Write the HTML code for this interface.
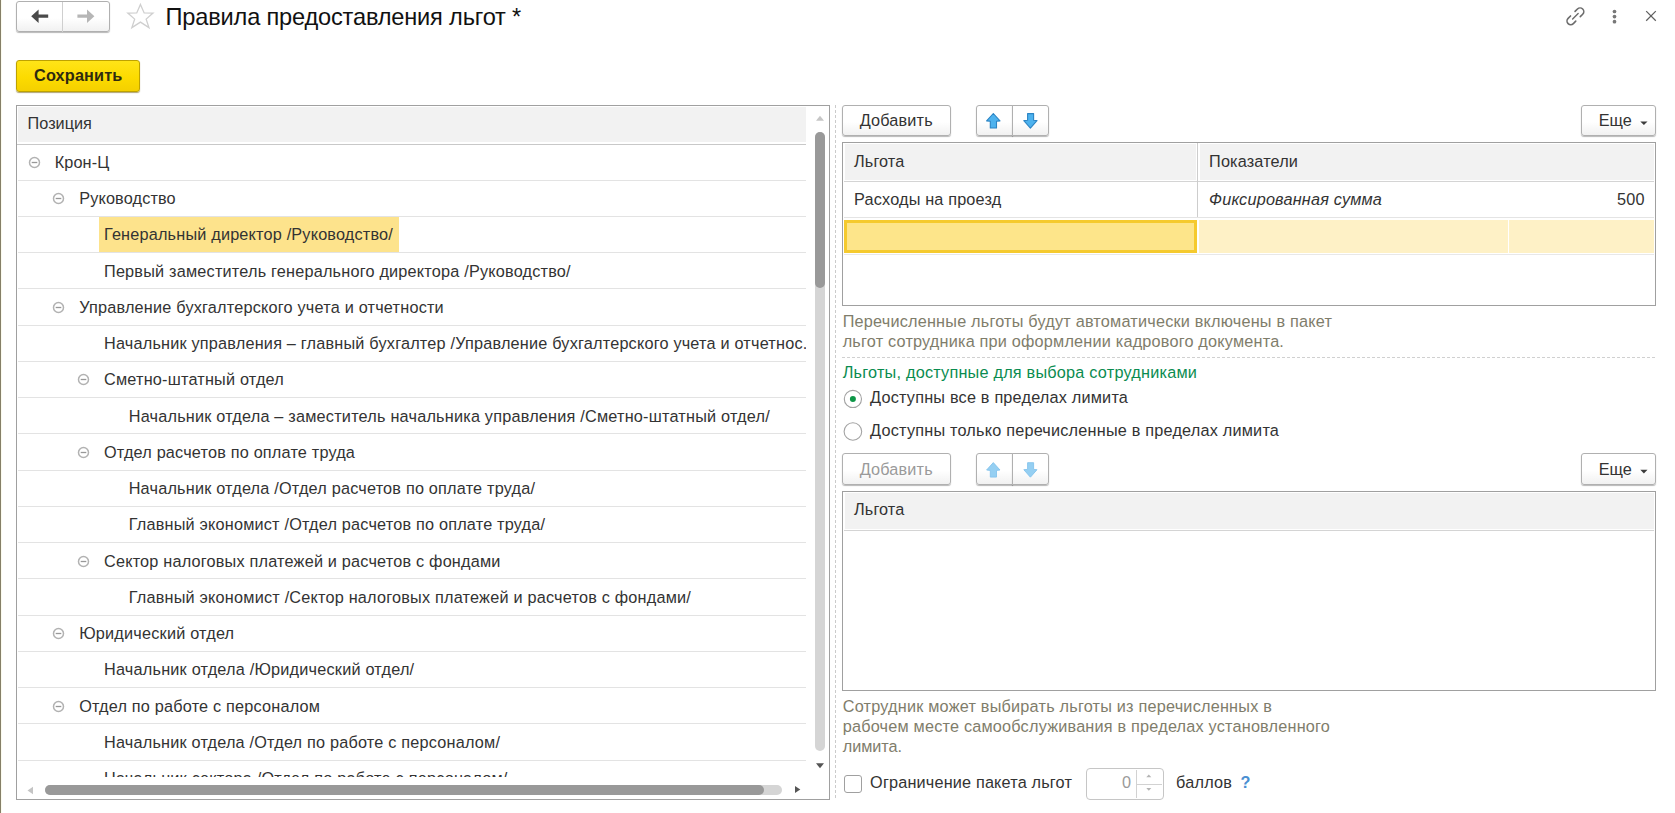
<!DOCTYPE html>
<html lang="ru">
<head>
<meta charset="utf-8">
<title>Правила предоставления льгот</title>
<style>
html,body{margin:0;padding:0;}
body{width:1675px;height:813px;overflow:hidden;background:#fff;position:relative;font-family:"Liberation Sans",sans-serif;font-size:16.25px;color:#333;}
.abs{position:absolute;}
.t{position:absolute;white-space:nowrap;line-height:20px;height:20px;}
.edge{position:absolute;left:0;top:0;width:1px;height:813px;background:#857f67;}
.edge2{position:absolute;left:1px;top:0;width:1px;height:813px;background:#fbfbee;}
.btn{position:absolute;box-sizing:border-box;border:1px solid #b0b0b0;border-radius:3px;background:linear-gradient(#ffffff 0%,#ffffff 55%,#f1f1f1 100%);box-shadow:0 1px 1px rgba(0,0,0,.28);}
.btn.l{border-radius:3px 0 0 3px;}
.btn.r{border-radius:0 3px 3px 0;}
.save{position:absolute;box-sizing:border-box;left:16px;top:60px;width:124px;height:32px;border:1px solid #bea200;border-radius:3px;background:linear-gradient(#ffe418 0%,#fcdb00 55%,#f4d000 100%);box-shadow:0 1px 1px rgba(110,90,0,.55);}
.panel{position:absolute;box-sizing:border-box;border:1px solid #a0a0a0;background:#fff;overflow:hidden;}
.hdr{position:absolute;background:#f2f2f2;}
.rl{position:absolute;left:1px;width:788px;height:1px;background:#e3e3e3;}
.sel{position:absolute;background:#fde38c;}
.ico{position:absolute;}
.vdash{position:absolute;left:835px;top:105px;width:1px;height:695px;background:repeating-linear-gradient(to bottom,#cbcbcb 0,#cbcbcb 3px,transparent 3px,transparent 5px);}
.hdash{position:absolute;left:842px;top:357px;width:814px;height:1px;background:repeating-linear-gradient(to right,#d0d0d0 0,#d0d0d0 3px,transparent 3px,transparent 5px);}
</style>
</head>
<body>
<div class="edge"></div><div class="edge2"></div>

<!-- nav buttons -->
<div class="btn" style="left:16px;top:1px;width:94px;height:31px;"></div>
<div class="abs" style="left:62px;top:2px;width:1px;height:30px;background:#cfcfcf;"></div>

<!-- star -->

<!-- top right icons -->

<!-- save -->
<div class="save"></div>

<!-- tree panel -->
<div class="panel" style="left:16px;top:105px;width:814px;height:695px;">
  <div class="hdr" style="left:1px;top:1px;width:788px;height:35px;"></div>
  <div class="abs" style="left:0;top:38px;width:789px;height:1px;background:#c8c8c8;"></div>
  <span class="t" style="left:10.6px;top:7px;">Позиция</span>
<div class="rl" style="top:74px"></div>
<svg class="ico" style="left:11.2px;top:49.8px" width="13" height="13" viewBox="0 0 13 13"><circle cx="6.5" cy="6.5" r="5" fill="#fff" stroke="#b2b2b2" stroke-width="1.5"/><path d="M3.7 6.5h5.6" stroke="#989898" stroke-width="1.3"/></svg>
<div class="rl" style="top:110px"></div>
<svg class="ico" style="left:34.9px;top:86.1px" width="13" height="13" viewBox="0 0 13 13"><circle cx="6.5" cy="6.5" r="5" fill="#fff" stroke="#b2b2b2" stroke-width="1.5"/><path d="M3.7 6.5h5.6" stroke="#989898" stroke-width="1.3"/></svg>
<div class="rl" style="top:146px"></div>
<div class="sel" style="left:82px;top:111px;width:300px;height:35px"></div>
<div class="rl" style="top:182px"></div>
<div class="rl" style="top:219px"></div>
<svg class="ico" style="left:34.9px;top:194.8px" width="13" height="13" viewBox="0 0 13 13"><circle cx="6.5" cy="6.5" r="5" fill="#fff" stroke="#b2b2b2" stroke-width="1.5"/><path d="M3.7 6.5h5.6" stroke="#989898" stroke-width="1.3"/></svg>
<div class="rl" style="top:255px"></div>
<div class="rl" style="top:291px"></div>
<svg class="ico" style="left:59.7px;top:267.3px" width="13" height="13" viewBox="0 0 13 13"><circle cx="6.5" cy="6.5" r="5" fill="#fff" stroke="#b2b2b2" stroke-width="1.5"/><path d="M3.7 6.5h5.6" stroke="#989898" stroke-width="1.3"/></svg>
<div class="rl" style="top:327px"></div>
<div class="rl" style="top:364px"></div>
<svg class="ico" style="left:59.7px;top:339.8px" width="13" height="13" viewBox="0 0 13 13"><circle cx="6.5" cy="6.5" r="5" fill="#fff" stroke="#b2b2b2" stroke-width="1.5"/><path d="M3.7 6.5h5.6" stroke="#989898" stroke-width="1.3"/></svg>
<div class="rl" style="top:400px"></div>
<div class="rl" style="top:436px"></div>
<div class="rl" style="top:472px"></div>
<svg class="ico" style="left:59.7px;top:448.5px" width="13" height="13" viewBox="0 0 13 13"><circle cx="6.5" cy="6.5" r="5" fill="#fff" stroke="#b2b2b2" stroke-width="1.5"/><path d="M3.7 6.5h5.6" stroke="#989898" stroke-width="1.3"/></svg>
<div class="rl" style="top:509px"></div>
<div class="rl" style="top:545px"></div>
<svg class="ico" style="left:34.9px;top:521.0px" width="13" height="13" viewBox="0 0 13 13"><circle cx="6.5" cy="6.5" r="5" fill="#fff" stroke="#b2b2b2" stroke-width="1.5"/><path d="M3.7 6.5h5.6" stroke="#989898" stroke-width="1.3"/></svg>
<div class="rl" style="top:581px"></div>
<div class="rl" style="top:617px"></div>
<svg class="ico" style="left:34.9px;top:593.5px" width="13" height="13" viewBox="0 0 13 13"><circle cx="6.5" cy="6.5" r="5" fill="#fff" stroke="#b2b2b2" stroke-width="1.5"/><path d="M3.7 6.5h5.6" stroke="#989898" stroke-width="1.3"/></svg>
<div class="rl" style="top:654px"></div>
<span class="t" style="left:37.7px;top:46px;font-size:16.25px;letter-spacing:0.124px;">Крон-Ц</span>
<span class="t" style="left:62.2px;top:82px;font-size:16.25px;letter-spacing:0.148px;">Руководство</span>
<span class="t" style="left:87.0px;top:118px;font-size:16.25px;letter-spacing:0.182px;">Генеральный директор /Руководство/</span>
<span class="t" style="left:87.0px;top:155px;font-size:16.25px;letter-spacing:0.200px;">Первый заместитель генерального директора /Руководство/</span>
<span class="t" style="left:62.2px;top:191px;font-size:16.25px;letter-spacing:0.204px;">Управление бухгалтерского учета и отчетности</span>
<span class="t" style="left:87.0px;top:227px;font-size:16.25px;letter-spacing:0.198px;">Начальник управления – главный бухгалтер /Управление бухгалтерского учета и отчетнос...</span>
<span class="t" style="left:87.0px;top:263px;font-size:16.25px;letter-spacing:0.201px;">Сметно-штатный отдел</span>
<span class="t" style="left:111.7px;top:300px;font-size:16.25px;letter-spacing:0.208px;">Начальник отдела – заместитель начальника управления /Сметно-штатный отдел/</span>
<span class="t" style="left:87.0px;top:336px;font-size:16.25px;letter-spacing:0.186px;">Отдел расчетов по оплате труда</span>
<span class="t" style="left:111.7px;top:372px;font-size:16.25px;letter-spacing:0.200px;">Начальник отдела /Отдел расчетов по оплате труда/</span>
<span class="t" style="left:111.7px;top:408px;font-size:16.25px;letter-spacing:0.194px;">Главный экономист /Отдел расчетов по оплате труда/</span>
<span class="t" style="left:87.0px;top:445px;font-size:16.25px;letter-spacing:0.196px;">Сектор налоговых платежей и расчетов с фондами</span>
<span class="t" style="left:111.7px;top:481px;font-size:16.25px;letter-spacing:0.205px;">Главный экономист /Сектор налоговых платежей и расчетов с фондами/</span>
<span class="t" style="left:62.2px;top:517px;font-size:16.25px;letter-spacing:0.209px;">Юридический отдел</span>
<span class="t" style="left:87.0px;top:553px;font-size:16.25px;letter-spacing:0.211px;">Начальник отдела /Юридический отдел/</span>
<span class="t" style="left:62.2px;top:590px;font-size:16.25px;letter-spacing:0.193px;">Отдел по работе с персоналом</span>
<span class="t" style="left:87.0px;top:626px;font-size:16.25px;letter-spacing:0.201px;">Начальник отдела /Отдел по работе с персоналом/</span>
<span class="t" style="left:87.0px;top:662px;font-size:16.25px;letter-spacing:0.212px;">Начальник сектора /Отдел по работе с персоналом/</span>
  <!-- mask below rows / horizontal scrollbar -->
  <div class="abs" style="left:0;top:671px;width:812px;height:22px;background:#fff;"></div>
  <div class="abs" style="left:28px;top:679px;width:737px;height:10px;border-radius:5px;background:#d5d5d5;"></div>
  <div class="abs" style="left:28px;top:679px;width:719px;height:10px;border-radius:5px;background:#999;"></div>
  <svg class="abs" style="left:10px;top:680px" width="7" height="9" viewBox="0 0 7 9"><path d="M0.5 4.5 L6 0.8 L6 8.2 Z" fill="#c4c4c4"/></svg>
  <svg class="abs" style="left:777px;top:679px" width="7" height="9" viewBox="0 0 7 9"><path d="M6.3 4.5 L1 1 L1 8 Z" fill="#555"/></svg>
  <!-- vertical scrollbar -->
  <div class="abs" style="left:789px;top:0;width:24px;height:669px;background:#fff;"></div>
  <div class="abs" style="left:798px;top:26px;width:10px;height:619px;border-radius:5px;background:#d5d5d5;"></div>
  <div class="abs" style="left:798px;top:26px;width:10px;height:156px;border-radius:5px;background:#999;"></div>
  <svg class="abs" style="left:798px;top:9px" width="10" height="7" viewBox="0 0 10 7"><path d="M5 0.8 L9 5.8 L1 5.8 Z" fill="#c6c6c6"/></svg>
  <svg class="abs" style="left:798px;top:656px" width="10" height="7" viewBox="0 0 10 7"><path d="M5 6.2 L9 1.2 L1 1.2 Z" fill="#555"/></svg>
</div>

<div class="vdash"></div>

<!-- right: toolbar 1 -->
<div class="btn" style="left:842px;top:105px;width:109px;height:31px;"></div>
<div class="btn l" style="left:976px;top:105px;width:37px;height:31px;"></div>
<div class="btn r" style="left:1012px;top:105px;width:37px;height:31px;"></div>
<div class="btn" style="left:1581px;top:105px;width:75px;height:31px;"></div>

<!-- table 1 -->
<div class="panel" style="left:842px;top:142px;width:814px;height:164px;">
  <div class="hdr" style="left:2px;top:1px;width:351px;height:36px;"></div>
  <div class="hdr" style="left:357px;top:1px;width:454px;height:36px;"></div>
  <div class="abs" style="left:1px;top:38px;width:810px;height:1px;background:#d4d4d4;"></div>
  <div class="abs" style="left:354px;top:0;width:1px;height:74px;background:#cdcdcd;"></div>
  <div class="abs" style="left:1px;top:74px;width:810px;height:1px;background:#e4e4e4;"></div>
  <div class="abs" style="left:356px;top:77px;width:309px;height:33px;background:#fef1c6;"></div>
  <div class="abs" style="left:666px;top:77px;width:145px;height:33px;background:#fef1c6;"></div>
  <div class="abs" style="left:1px;top:77px;width:353px;height:33px;box-sizing:border-box;border:3px solid #f5ca2e;background:#fde58a;"></div>
  <div class="abs" style="left:1px;top:111px;width:810px;height:1px;background:#e8e8e8;"></div>
</div>

<div class="hdash"></div>

<!-- radios -->

<!-- toolbar 2 -->
<div class="btn" style="left:842px;top:453px;width:109px;height:32px;"></div>
<div class="btn l" style="left:976px;top:453px;width:37px;height:32px;"></div>
<div class="btn r" style="left:1012px;top:453px;width:37px;height:32px;"></div>
<div class="btn" style="left:1581px;top:453px;width:75px;height:32px;"></div>

<!-- table 2 -->
<div class="panel" style="left:842px;top:491px;width:814px;height:200px;">
  <div class="hdr" style="left:2px;top:1px;width:809px;height:36px;"></div>
  <div class="abs" style="left:1px;top:38px;width:810px;height:1px;background:#d4d4d4;"></div>
</div>

<!-- checkbox + number -->
<div class="abs" style="left:844px;top:775px;width:18px;height:18px;box-sizing:border-box;border:1px solid #a0a0a0;border-radius:3px;background:#fff;"></div>
<div class="abs" style="left:1086px;top:768px;width:78px;height:32px;box-sizing:border-box;border:1px solid #c6c6c6;border-radius:4px;background:#fff;"></div>
<div class="abs" style="left:1136px;top:770px;width:1px;height:28px;background:#d2d2d2;"></div>
<div class="abs" style="left:1137px;top:784px;width:25px;height:1px;background:#d2d2d2;"></div>

<!-- icon overlay in page coordinates -->
<svg class="abs" style="left:0;top:0" width="1675" height="813" viewBox="0 0 1675 813">
  <!-- nav arrows -->
  <path d="M31.2 16.2 L38.6 9.4 L38.6 14.6 L48.2 14.6 L48.2 17.8 L38.6 17.8 L38.6 23 Z" fill="#4a4a4a"/>
  <path d="M94.4 16.2 L87 9.4 L87 14.6 L77.4 14.6 L77.4 17.8 L87 17.8 L87 23 Z" fill="#b6b6b6"/>
  <!-- star -->
  <path d="M140.44 4.40 L144.15 12.95 L152.98 13.10 L146.15 19.1 L148.95 27.6 L140.44 22.1 L131.85 27.6 L134.65 19.1 L127.82 13.10 L136.74 12.96 Z" fill="#fff" stroke="#cfcfcf" stroke-width="1.3" stroke-linejoin="miter"/>
  <!-- link icon -->
  <g transform="translate(1575.4 16.3) rotate(-45)" fill="none" stroke="#6c6c6c" stroke-width="1.6" stroke-linecap="round">
    <path d="M3.2 -3.7 L6.6 -3.7 A3.7 3.7 0 0 1 6.6 3.7 L3.2 3.7"/>
    <path d="M-3.2 -3.7 L-6.6 -3.7 A3.7 3.7 0 0 0 -6.6 3.7 L-3.2 3.7"/>
    <path d="M-3.9 0 L3.9 0" stroke-width="1.4"/>
  </g>
  <!-- dots -->
  <circle cx="1614.5" cy="11.5" r="1.85" fill="#787878"/><circle cx="1614.5" cy="16.6" r="1.85" fill="#787878"/><circle cx="1614.5" cy="21.7" r="1.85" fill="#787878"/>
  <!-- close -->
  <path d="M1646.2 11.1 L1655.8 20.8 M1655.8 11.1 L1646.2 20.8" stroke="#606060" stroke-width="1.25" fill="none"/>
  <!-- toolbar 1 arrows -->
  <path d="M993.3 113.5 L1000 120.9 L996.5 121.3 L996.5 128 L990.3 128 L990.3 121.3 L986.6 120.9 Z" fill="#4db2ee" stroke="#2b84c4" stroke-width="1.1" stroke-linejoin="round"/>
  <path d="M1027.6 113.6 L1033.6 113.6 L1033.6 120.3 L1037 120.6 L1030.4 128.1 L1023.8 120.6 L1027.6 120.3 Z" fill="#4db2ee" stroke="#2b84c4" stroke-width="1.1" stroke-linejoin="round"/>
  <!-- toolbar 2 arrows (disabled) -->
  <g transform="translate(0 349.1)">
  <path d="M993.3 113.5 L1000 120.9 L996.5 121.3 L996.5 128 L990.3 128 L990.3 121.3 L986.6 120.9 Z" fill="#95cff2" stroke="#84c3ec" stroke-width="0.9" stroke-linejoin="round"/>
  <path d="M1027.6 113.6 L1033.6 113.6 L1033.6 120.3 L1037 120.6 L1030.4 128.1 L1023.8 120.6 L1027.6 120.3 Z" fill="#95cff2" stroke="#84c3ec" stroke-width="0.9" stroke-linejoin="round"/>
  </g>
  <!-- carets -->
  <path d="M1640.3 121.5 L1647.5 121.5 L1643.9 125.1 Z" fill="#3c3c3c"/>
  <path d="M1640.3 469.8 L1647.5 469.8 L1643.9 473.4 Z" fill="#3c3c3c"/>
  <!-- radios -->
  <circle cx="852.9" cy="398.95" r="8.6" fill="#fff" stroke="#a3a3a3" stroke-width="1.1"/>
  <circle cx="852.9" cy="398.95" r="3" fill="#0d9647"/>
  <circle cx="852.9" cy="431.5" r="8.8" fill="#fff" stroke="#a3a3a3" stroke-width="1.1"/>
  <!-- spinner arrows -->
  <path d="M1148.8 774.6 L1151.3 777.3 L1146.3 777.3 Z" fill="#b4b4b4"/>
  <path d="M1148.8 790.8 L1151.3 788.1 L1146.3 788.1 Z" fill="#b4b4b4"/>
</svg>

<span class="t" style="left:165.6px;top:7px;font-size:23.6px;letter-spacing:-0.181px;color:#111;">Правила предоставления льгот *</span>
<span class="t" style="left:34.0px;top:65px;font-size:16.25px;letter-spacing:0.165px;font-weight:bold;color:#2e2a10;">Сохранить</span>
<span class="t" style="left:859.7px;top:110px;font-size:16.25px;letter-spacing:0.171px;">Добавить</span>
<span class="t" style="left:1598.8px;top:110px;font-size:16.25px;letter-spacing:-0.026px;">Еще</span>
<span class="t" style="left:854.1px;top:151px;font-size:16.25px;letter-spacing:0.085px;">Льгота</span>
<span class="t" style="left:1209.1px;top:151px;font-size:16.25px;letter-spacing:0.150px;">Показатели</span>
<span class="t" style="left:854.1px;top:189px;font-size:16.25px;letter-spacing:0.163px;">Расходы на проезд</span>
<span class="t" style="left:1209.1px;top:189px;font-size:16.25px;letter-spacing:0.192px;font-style:italic;">Фиксированная сумма</span>
<span class="t" style="left:1617.1px;top:189px;font-size:16.25px;letter-spacing:0.125px;">500</span>
<span class="t" style="left:842.7px;top:311px;font-size:16.25px;letter-spacing:0.200px;color:#7f7d6b;">Перечисленные льготы будут автоматически включены в пакет</span>
<span class="t" style="left:842.7px;top:331px;font-size:16.25px;letter-spacing:0.195px;color:#7f7d6b;">льгот сотрудника при оформлении кадрового документа.</span>
<span class="t" style="left:842.7px;top:362px;font-size:16.25px;letter-spacing:0.214px;color:#0a8c50;">Льготы, доступные для выбора сотрудниками</span>
<span class="t" style="left:870.1px;top:387px;font-size:16.25px;letter-spacing:0.196px;">Доступны все в пределах лимита</span>
<span class="t" style="left:870.1px;top:420px;font-size:16.25px;letter-spacing:0.203px;">Доступны только перечисленные в пределах лимита</span>
<span class="t" style="left:859.7px;top:459px;font-size:16.25px;letter-spacing:0.171px;color:#9a9a9a;">Добавить</span>
<span class="t" style="left:1598.8px;top:459px;font-size:16.25px;letter-spacing:-0.026px;">Еще</span>
<span class="t" style="left:854.1px;top:499px;font-size:16.25px;letter-spacing:0.085px;">Льгота</span>
<span class="t" style="left:842.7px;top:696px;font-size:16.25px;letter-spacing:0.208px;color:#7f7d6b;">Сотрудник может выбирать льготы из перечисленных в</span>
<span class="t" style="left:842.7px;top:716px;font-size:16.25px;letter-spacing:0.200px;color:#7f7d6b;">рабочем месте самообслуживания в пределах установленного</span>
<span class="t" style="left:842.7px;top:736px;font-size:16.25px;letter-spacing:-0.032px;color:#7f7d6b;">лимита.</span>
<span class="t" style="left:870.1px;top:772px;font-size:16.25px;letter-spacing:0.171px;">Ограничение пакета льгот</span>
<span class="t" style="left:1122.1px;top:772px;font-size:16.25px;letter-spacing:0.953px;color:#9a9a9a;">0</span>
<span class="t" style="left:1176.1px;top:772px;font-size:16.25px;letter-spacing:0.201px;">баллов</span>
<span class="t" style="left:1240.6px;top:772px;font-size:16.25px;letter-spacing:-0.938px;color:#4a8fd2;font-weight:bold;">?</span>
</body>
</html>
